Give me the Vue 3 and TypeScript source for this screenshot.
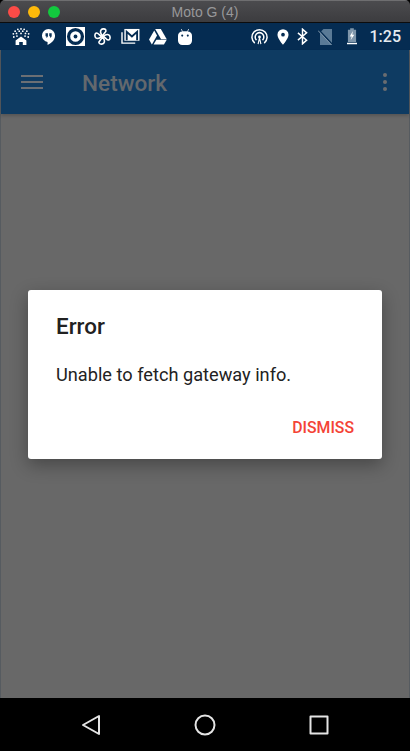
<template>
  <div class="window">
    <header class="titlebar">
      <div class="lights">
        <span class="light red"></span>
        <span class="light yellow"></span>
        <span class="light green"></span>
      </div>
      <span class="window-title">Moto G (4)</span>
    </header>

    <div class="statusbar">
      <div class="status-left">
        <span class="slot">
          <svg width="18" height="18" viewBox="0 0 20 20" fill="#fff">
            <circle v-for="d in treeDots" :key="d.join()" :cx="d[0]" :cy="d[1]" r="1" />
            <path d="M10 9.500 16 14v5h-4v-3.500H8V19H4v-5z" />
          </svg>
        </span>
        <span class="slot">
          <svg width="15" height="19" viewBox="0 0 16 20">
            <path fill="#fff" d="M8 2a7 7 0 0 0-7 7 7 7 0 0 0 6 6.900V19c3.600-1.500 8-5 8-10a7 7 0 0 0-7-7z" />
            <path fill="#0a3157" d="M4.800 6.500h2.600v2.700c0 1.100-.6 1.900-1.700 2.200v-1.600h-.9zM8.800 6.500h2.600v2.700c0 1.100-.6 1.900-1.700 2.200v-1.600h-.9z" />
          </svg>
        </span>
        <span class="slot">
          <svg width="19" height="19" viewBox="0 0 20 20">
            <rect width="20" height="20" fill="#fff" />
            <circle cx="10" cy="10" r="7.300" fill="none" stroke="#052c52" stroke-width="3.400" />
            <circle cx="10" cy="10" r="2" fill="#052c52" />
          </svg>
        </span>
        <span class="slot">
          <svg width="17" height="17" viewBox="0 0 18 18" fill="none" stroke="#fff" stroke-width="1.700" stroke-linejoin="round">
            <path v-for="a in fanAngles" :key="a" :transform="`rotate(${a} 9 9)`" d="M9 8.500C7 6 6.500 3.500 7.500 2c1-1.300 4-1.500 5 0 .8 1.500-.5 2.500-1.500 3.500C10 6.500 9.500 7.500 9 8.500z" />
          </svg>
        </span>
        <span class="slot">
          <svg width="19" height="17" viewBox="0 0 20 18">
            <path fill="none" stroke="#fff" stroke-width="1.500" d="M1 4.500V16h14" />
            <rect x="3.500" y="1" width="16" height="12.500" fill="#fff" />
            <path fill="none" stroke="#052c52" stroke-width="2" d="M6 13V4l5.500 5L17 4v9" />
          </svg>
        </span>
        <span class="slot">
          <svg width="18" height="16" viewBox="0 0 19 17" fill="#fff">
            <path d="M6.500 0h6l6.300 10.800h-6z" />
            <path d="M5.500 1.500 8.500 6.800 3 16.500 0 11.200z" />
            <path d="M4.800 16.500 7.800 11.500h11l-3 5z" />
          </svg>
        </span>
        <span class="slot">
          <svg width="14" height="16" viewBox="0 0 15 17" fill="#fff">
            <path d="M3.500 0 5 3h5l1.500-3" fill="none" stroke="#fff" stroke-width=".8" />
            <rect y="2.500" width="15" height="14.500" rx="4.500" />
            <circle cx="4.500" cy="7" r="1.100" fill="#052c52" />
            <circle cx="10.500" cy="7" r="1.100" fill="#052c52" />
          </svg>
        </span>
      </div>
      <div class="status-right">
        <svg class="ic" width="17" height="17" viewBox="0 0 18 18" fill="none" stroke="#fff" stroke-width="1.600">
          <path d="M4 16A8 8 0 1 1 14 16" />
          <path d="M5.800 12.800A4.600 4.600 0 1 1 12.200 12.800" />
          <circle cx="9" cy="9.500" r="1.500" fill="#fff" stroke="none" />
          <path d="M7.500 17 9 10.500 10.500 17" stroke-width="1.200" />
        </svg>
        <svg class="ic" width="12" height="16" viewBox="0 0 13 17">
          <path fill="#fff" d="M6.500 0A6 6 0 0 0 .5 6c0 4 6 11 6 11s6-7 6-11a6 6 0 0 0-6-6z" />
          <circle cx="6.500" cy="6" r="2" fill="#052c52" />
        </svg>
        <svg class="ic bt" width="11" height="17" viewBox="0 0 12 18" fill="none" stroke="#fff" stroke-width="1.600">
          <path d="M1 5 10.500 13 6 17V1l4.500 4L1 13" />
        </svg>
        <svg class="ic sim" width="15" height="16" viewBox="0 0 15 16">
          <path fill="#5a7a96" d="M5.500 0H14v16H2V3.500z" />
          <path stroke="#052c52" stroke-width="1.500" d="M0 0l15 16" />
          <path stroke="#8096aa" stroke-width="1" d="M0 1.500l13.500 14.500" />
        </svg>
        <svg class="ic batt" width="10" height="17" viewBox="0 0 11 18">
          <path fill="#7f96ab" d="M3.500 0h4v1.500H10V15H1V1.500h2.500z" />
          <path fill="#fff" d="M6.500 3 3 9h2.200L4 13l4-6H5.800zM0 16h11v1.500H0z" />
        </svg>
        <span class="clock">1:25</span>
      </div>
    </div>

    <main class="screen">
      <div class="toolbar">
        <div class="menu-icon"><span></span><span></span><span></span></div>
        <span class="toolbar-title">Network</span>
        <div class="more-icon"><span></span><span></span><span></span></div>
      </div>
      <div class="content"></div>

      <div class="overlay">
        <section class="dialog">
          <h2 class="dialog-title">Error</h2>
          <p class="dialog-text">{{ message }}</p>
          <div class="dialog-actions">
            <button class="dismiss" type="button">DISMISS</button>
          </div>
        </section>
      </div>
    </main>

    <nav class="navbar">
      <svg width="20" height="22" viewBox="0 0 20 22" fill="none" stroke="#e4e4e4" stroke-width="2" stroke-linejoin="round">
        <path d="M18 2v18L2 11z" />
      </svg>
      <svg width="22" height="22" viewBox="0 0 22 22" fill="none" stroke="#e4e4e4" stroke-width="2">
        <circle cx="11" cy="11" r="9.500" />
      </svg>
      <svg width="20" height="20" viewBox="0 0 20 20" fill="none" stroke="#e4e4e4" stroke-width="2" stroke-linejoin="round">
        <rect x="1.500" y="1.500" width="17" height="17" />
      </svg>
    </nav>
  </div>
</template>

<script setup lang="ts">
const message = 'Unable to fetch gateway info.';

const fanAngles = [0, 90, 180, 270];

// dots of the little tree above the house
const treeDots: number[][] = [
  [10, 1], [6.500, 1.500], [13.500, 1.500], [3.500, 3.500], [8, 3.500], [12, 3.500], [16.500, 3.500],
  [1.500, 6.500], [5, 6], [10, 6], [15, 6], [18.500, 6.500], [2, 10], [5.500, 9], [14.500, 9], [18, 10],
];
</script>

<style>
html,
body {
  margin: 0;
  background: #000;
}
</style>

<style scoped>
.window {
  display: flex;
  flex-direction: column;
  width: 410px;
  height: 751px;
  overflow: hidden;
  font-family: Roboto, "Liberation Sans", sans-serif;
  border-radius: 5px 5px 6px 6px;
}

.titlebar {
  position: relative;
  flex: 0 0 23px;
  display: flex;
  align-items: center;
  justify-content: center;
  box-sizing: border-box;
  border-top: 1px solid #6e6e70;
  border-bottom: 1px solid #0c0c0d;
  background: linear-gradient(180deg, #4b4b4e, #3c3c3f);
}

.lights {
  position: absolute;
  left: 8px;
  top: 5px;
  display: flex;
  gap: 8px;
}

.light {
  width: 12px;
  height: 12px;
  border-radius: 50%;
}

.red { background: #fc4b47; }
.yellow { background: #fdb90a; }
.green { background: #12c93e; }

.window-title {
  font-family: "Liberation Sans", Arial, sans-serif;
  font-size: 14px;
  color: #98989a;
}

.statusbar {
  flex: 0 0 27px;
  display: flex;
  align-items: center;
  justify-content: space-between;
  padding: 0 9px 0 7px;
  background: #052c52;
}

.status-left,
.status-right {
  display: flex;
  align-items: center;
}

.slot {
  display: flex;
  align-items: center;
  justify-content: center;
  width: 27.4px;
}

.status-right {
  gap: 9px;
}

.ic {
  display: block;
  flex: none;
}

.bt {
  margin-left: -1px;
}

.sim {
  margin-left: 1px;
}

.batt {
  margin-left: 5px;
}

.clock {
  margin-left: 4px;
  font-size: 16px;
  font-weight: 500;
  color: #e6ebf0;
}

.screen {
  position: relative;
  flex: 1;
  display: flex;
  flex-direction: column;
  min-height: 0;
  border-left: 1px solid #565b60;
  border-right: 1px solid #565b60;
}

.toolbar {
  flex: 0 0 64px;
  display: flex;
  align-items: center;
  padding: 0 21px 0 20px;
  background: #0e3b62;
  box-shadow: 0 2px 3px rgba(0, 0, 0, 0.18);
  z-index: 1;
}

.menu-icon {
  display: flex;
  flex-direction: column;
  gap: 4px;
  width: 22px;
}

.menu-icon span {
  height: 2px;
  background: #6b6f74;
}

.toolbar-title {
  margin: 2px 0 0 39px;
  font-size: 22.6px;
  font-weight: 500;
  color: #63686d;
}

.more-icon {
  margin-left: auto;
  display: flex;
  flex-direction: column;
  gap: 3px;
  margin-right: 1px;
}

.more-icon span {
  width: 4px;
  height: 4px;
  border-radius: 50%;
  background: #696c70;
}

.content {
  flex: 1;
  background: #686868;
}

.overlay {
  position: absolute;
  inset: 0;
  z-index: 2;
  display: flex;
  align-items: center;
  justify-content: center;
}

.dialog {
  box-sizing: border-box;
  width: 354px;
  height: 169px;
  padding: 24px 28px 0;
  border-radius: 3px;
  background: #fff;
  box-shadow: 0 6px 18px rgba(0, 0, 0, 0.32);
}

.dialog-title {
  margin: 0;
  font-size: 22.4px;
  line-height: 25px;
  font-weight: 500;
  color: #212121;
}

.dialog-text {
  margin: 25px 0 0;
  font-size: 18.2px;
  line-height: 22px;
  color: #222;
}

.dialog-actions {
  display: flex;
  justify-content: flex-end;
  margin-top: 33px;
}

.dismiss {
  padding: 0;
  border: 0;
  background: none;
  font-family: inherit;
  font-size: 15.8px;
  font-weight: 500;
  line-height: 17px;
  color: #f44336;
}

.navbar {
  flex: 0 0 53px;
  display: flex;
  align-items: center;
  justify-content: center;
  gap: 93px;
  background: #000;
}
</style>
